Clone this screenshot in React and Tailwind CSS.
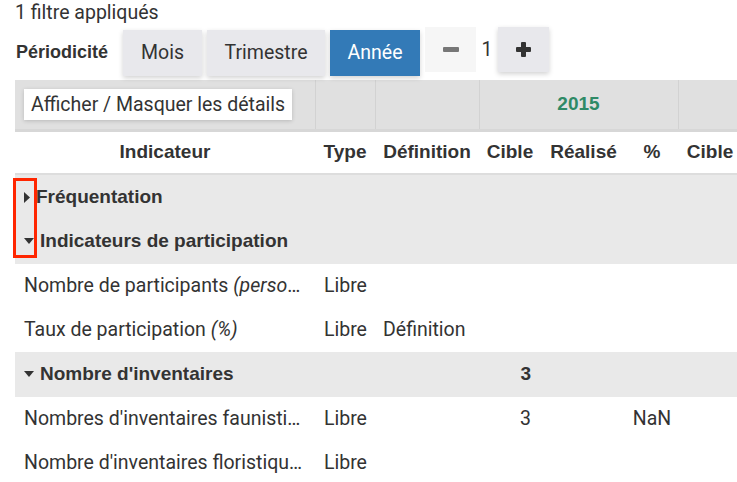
import React from 'react'

const head = "font-['Liberation_Sans',Arial,sans-serif] font-bold"

function Caret({ open }) {
  return open ? (
    <svg width="10" height="7" viewBox="0 0 10 7" className="mr-[6px] shrink-0">
      <path d="M0 0 L10 0 L5 6 Z" fill="#333" />
    </svg>
  ) : (
    <svg width="7" height="11" viewBox="0 0 7 11" className="mr-[5px] shrink-0">
      <path d="M0 0 L6 5.5 L0 11 Z" fill="#333" />
    </svg>
  )
}

function GroupRow({ label, open, cible }) {
  return (
    <tr className="bg-[#e9e9e9] h-[45px]">
      <td className="pl-[9px]">
        <div className={`flex items-center ${head} text-[19px]`}>
          <Caret open={open} />
          {label}
        </div>
      </td>
      <td />
      <td />
      <td className={`text-right pr-[10px] ${head} text-[19px]`}>{cible}</td>
      <td />
      <td />
      <td />
      <td />
      <td />
    </tr>
  )
}

function DataRow({ label, italic, def, cible, pct }) {
  return (
    <tr className="h-[44px] bg-white">
      <td className="pl-[9px] pr-[12px] whitespace-nowrap overflow-hidden text-ellipsis">
        {label}
        {italic && <i> {italic}</i>}
      </td>
      <td className="pl-[9px]">Libre</td>
      <td className="pl-[8px]">{def}</td>
      <td className="text-right pr-[10px]">{cible}</td>
      <td />
      <td className="text-center">{pct}</td>
      <td />
      <td />
      <td />
    </tr>
  )
}

export default function App() {
  const widths = [300, 60, 104, 62, 85, 52, 64, 85, 52]

  return (
    <div className="relative w-[737px] h-[482px] overflow-hidden bg-white text-[#333] font-['Roboto',sans-serif] text-[19.5px]">
      <div className="pl-[15px] leading-[26px]">1 filtre appliqués</div>

      {/* Periodicity toolbar */}
      <div className="flex items-start pl-[16px] h-[54px]">
        <span className={`${head} text-[18px] leading-[26px] mt-[13px]`}>Périodicité</span>
        <button className="ml-[15px] mt-[4px] h-[46px] w-[79px] bg-[#e8e8ec] shadow-[0_2px_5px_rgba(0,0,0,0.18)]">Mois</button>
        <button className="ml-[5px] mt-[4px] h-[46px] w-[118px] bg-[#e8e8ec] shadow-[0_2px_5px_rgba(0,0,0,0.18)]">Trimestre</button>
        <button className="ml-[5px] mt-[4px] h-[46px] w-[90px] bg-[#337ab7] text-white shadow-[0_2px_5px_rgba(0,0,0,0.18)]">Année</button>
        <button className="ml-[5px] mt-[1px] h-[45px] w-[51px] bg-[#f6f6f6] flex items-center justify-center">
          <svg width="16" height="5" viewBox="0 0 16 5"><rect width="16" height="5" rx="1" fill="#777" /></svg>
        </button>
        <span className="w-[22px] text-center mt-[11px] leading-[26px]">1</span>
        <button className="mt-[1px] h-[45px] w-[51px] bg-[#e8e8ec] flex items-center justify-center shadow-[0_2px_5px_rgba(0,0,0,0.18)]">
          <svg width="15" height="15" viewBox="0 0 15 15">
            <rect x="5" y="0" width="5" height="15" rx="1" fill="#333" />
            <rect x="0" y="5" width="15" height="5" rx="1" fill="#333" />
          </svg>
        </button>
      </div>

      {/* Table */}
      <div className="ml-[15px] overflow-hidden">
        <table className="table-fixed border-collapse w-[864px]">
          <colgroup>
            {widths.map((w, i) => (
              <col key={i} style={{ width: w }} />
            ))}
          </colgroup>
          <thead>
            <tr className="h-[50px] bg-[#e0e0e0] border-b-[3px] border-[#d7d7d7]">
              <td className="pl-[9px] align-middle">
                <button className="h-[31px] px-[7px] bg-white shadow-[0_1px_4px_rgba(0,0,0,0.18)]">Afficher / Masquer les détails</button>
              </td>
              <td className="border-l border-[#d2d2d2]" />
              <td className="border-l border-[#d2d2d2]" />
              <td colSpan={3} className={`border-l border-[#d2d2d2] text-center text-[#2e8a66] text-[19px] ${head}`}>2015</td>
              <td colSpan={3} className="border-l border-[#d2d2d2]" />
            </tr>
            <tr className={`h-[44px] border-b-2 border-[#dddddd] text-[19px] ${head}`}>
              <th className="text-center">Indicateur</th>
              <th className="text-center">Type</th>
              <th className="text-center">Définition</th>
              <th className="text-center">Cible</th>
              <th className="text-center">Réalisé</th>
              <th className="text-center">%</th>
              <th className="text-center">Cible</th>
              <th className="text-center">Réalisé</th>
              <th className="text-center">%</th>
            </tr>
          </thead>
          <tbody>
            <GroupRow label="Fréquentation" open={false} />
            <GroupRow label="Indicateurs de participation" open />
            <DataRow label="Nombre de participants" italic="(personnes)" />
            <DataRow label="Taux de participation" italic="(%)" def="Définition" />
            <GroupRow label="Nombre d'inventaires" open cible="3" />
            <DataRow label="Nombres d'inventaires faunistiques" cible="3" pct="NaN" />
            <DataRow label="Nombre d'inventaires floristiques" />
          </tbody>
        </table>
      </div>

      {/* red annotation box */}
      <div className="absolute left-[13px] top-[178px] w-[24px] h-[80px] border-[3px] border-[#ff2600]" />
    </div>
  )
}
